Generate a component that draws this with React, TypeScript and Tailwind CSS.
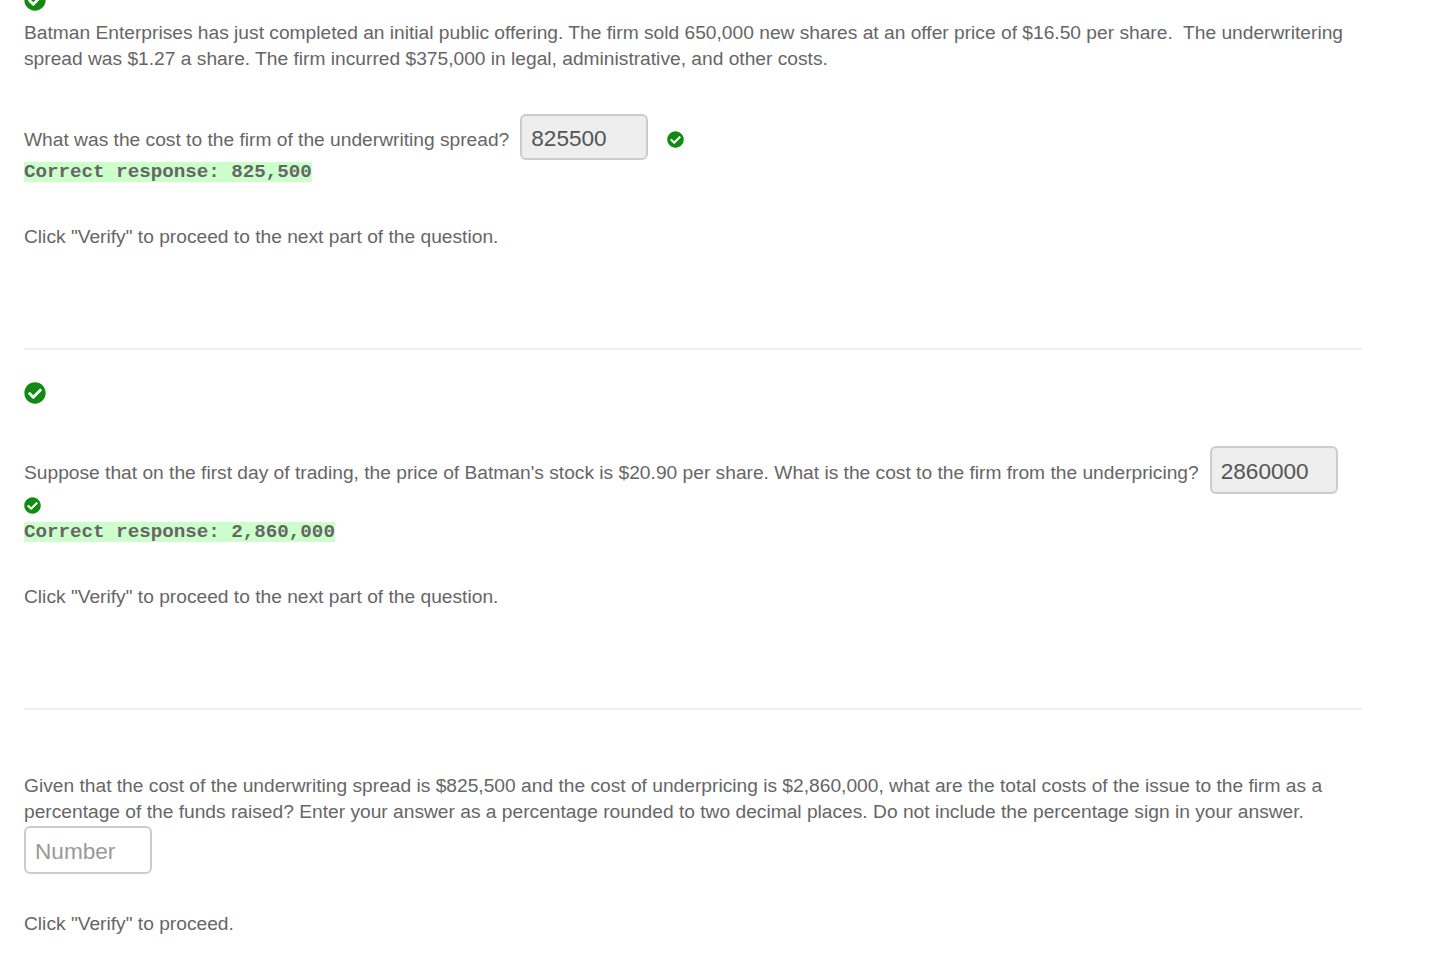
import React from 'react';
import { FaCheckCircle } from 'react-icons/fa';

const inputClass =
  "w-[128px] h-[48px] border-2 border-[#ccc] rounded-[6px] px-[9px] pt-[3px] text-[22.6px] text-[#555] font-['Liberation_Sans',sans-serif] outline-none placeholder:text-[#999]";

function CorrectResponse({ value }: { value: string }) {
  return (
    <div className="h-[26px] pt-[2px]">
      <span className="block w-fit bg-[#ccffcc] h-[20px] leading-[20px] font-['Liberation_Mono',monospace] font-bold text-[19.2px]">
        Correct response: {value}
      </span>
    </div>
  );
}

export default function App() {
  return (
    <div className="h-[978px] overflow-hidden bg-white pl-[24px] font-['Liberation_Sans',sans-serif] text-[19.2px] leading-[26px] text-[#666]">
      <div className="w-[1338px]">
        {/* Part one */}
        <FaCheckCircle className="-mt-[11px] -ml-[0.5px] text-[22px] text-[#118a11]" />
        <p className="mt-[9px] w-[1330px]">
          Batman Enterprises has just completed an initial public offering. The firm sold 650,000 new shares at an offer price of $16.50 per share.&nbsp; The underwritering spread was $1.27 a share. The firm incurred $375,000 in legal, administrative, and other costs.
        </p>
        <div className="mt-[42px] flex items-center h-[46px]">
          <span className="pt-[6px]">What was the cost to the firm of the underwriting spread?</span>
          <input readOnly value="825500" className={`${inputClass} ml-[11px] !h-[46px] bg-[#eee]`} />
          <FaCheckCircle className="ml-[19px] mt-[4px] text-[17px] text-[#118a11]" />
        </div>
        <CorrectResponse value="825,500" />
        <p className="mt-[38px]">Click "Verify" to proceed to the next part of the question.</p>
        <hr className="mt-[98px] border-0 h-[2px] bg-[#eee]" />

        {/* Part two */}
        <FaCheckCircle className="mt-[32px] -ml-[0.5px] text-[22px] text-[#118a11]" />
        <div className="mt-[42px] flex items-center h-[48px]">
          <span className="pt-[6px]">Suppose that on the first day of trading, the price of Batman's stock is $20.90 per share. What is the cost to the firm from the underpricing?</span>
          <input readOnly value="2860000" className={`${inputClass} ml-[11px] bg-[#eee]`} />
        </div>
        <FaCheckCircle className="mt-[3px] -ml-[0.5px] text-[17px] text-[#118a11]" />
        <div className="mt-[6px]">
          <CorrectResponse value="2,860,000" />
        </div>
        <p className="mt-[38px]">Click "Verify" to proceed to the next part of the question.</p>
        <hr className="mt-[98px] border-0 h-[2px] bg-[#eee]" />

        {/* Part three */}
        <p className="mt-[63px] w-[1330px]">
          Given that the cost of the underwriting spread is $825,500 and the cost of underpricing is $2,860,000, what are the total costs of the issue to the firm as a percentage of the funds raised? Enter your answer as a percentage rounded to two decimal places. Do not include the percentage sign in your answer.
        </p>
        <input placeholder="Number" className={`${inputClass} block mt-[1px] bg-white`} />
        <p className="mt-[37px]">Click "Verify" to proceed.</p>
      </div>
    </div>
  );
}
